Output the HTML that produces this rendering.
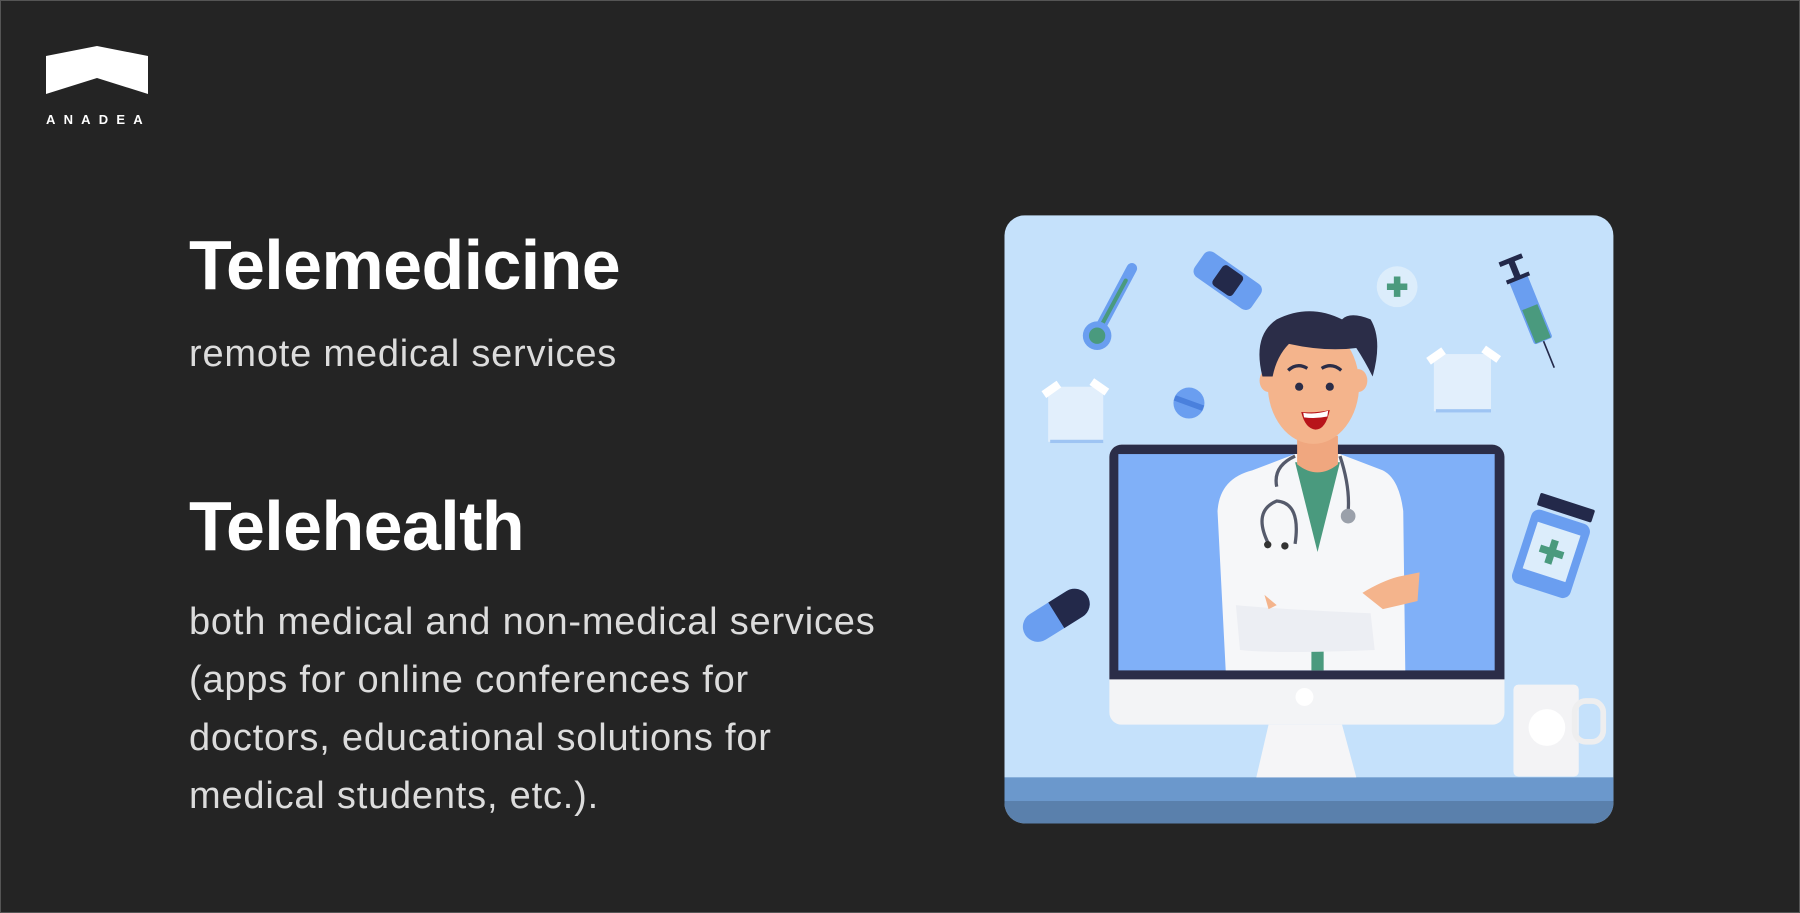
<!DOCTYPE html>
<html><head><meta charset="utf-8"><style>
html,body{margin:0;padding:0}
body{width:1800px;height:913px;background:#242424;position:relative;overflow:hidden;font-family:"Liberation Sans",Arial,sans-serif;border:1px solid #555;box-sizing:border-box}
.t{position:absolute;left:188px;color:#fff;font-weight:bold;font-size:70px;letter-spacing:-0.6px;line-height:1}
.s{position:absolute;left:188px;color:#dcdcdc;font-size:38px;letter-spacing:0.8px;line-height:58px}
.logo{position:absolute;left:45px;top:45px}
.an{position:absolute;left:45px;top:111px;color:#fff;font-size:13px;letter-spacing:8.2px;font-weight:bold}
</style></head><body>
<svg class="logo" width="102" height="48" viewBox="0 0 102 48"><path d="M0 10 L51 0 L102 10 L102 48 L51 32 L0 48 Z" fill="#fff"/></svg>
<div class="an">ANADEA</div>
<div class="t" style="top:229px">Telemedicine</div>
<div class="s" style="top:324px">remote medical services</div>
<div class="t" style="top:490px">Telehealth</div>
<div class="s" style="top:592px">both medical and non-medical services<br>(apps for online conferences for<br>doctors, educational solutions for<br>medical students, etc.).</div>

<svg style="position:absolute;left:990px;top:200px" width="640" height="640" viewBox="0 0 1568 1568">
<defs><clipPath id="c"><rect x="33" y="35" width="1492" height="1490" rx="50"/></clipPath></defs>
<g clip-path="url(#c)">
<rect x="33" y="35" width="1492" height="1490" fill="#c5e1fb"/>
<rect x="33" y="1412" width="1492" height="60" fill="#6b98cc"/>
<rect x="33" y="1470" width="1492" height="60" fill="#5a80ac"/>
</g>
<line x1="345" y1="165" x2="265" y2="315" stroke="#6a9ef0" stroke-width="26" stroke-linecap="round"/>
<line x1="330" y1="195" x2="265" y2="315" stroke="#4a9a7e" stroke-width="10" stroke-linecap="round"/>
<circle cx="260" cy="330" r="35" fill="#6a9ef0"/><circle cx="260" cy="330" r="20" fill="#4a9a7e"/>
<g transform="rotate(35 580 195)"><rect x="495" y="158" width="170" height="74" rx="18" fill="#6a9ef0"/><rect x="550" y="165" width="60" height="60" rx="10" fill="#23294a"/></g>
<circle cx="995" cy="210" r="50" fill="#dcedfb"/><path d="M995 185v50M970 210h50" stroke="#4a9a7e" stroke-width="16"/>
<g transform="rotate(-22 1320 260)"><rect x="1296" y="180" width="48" height="170" rx="6" fill="#6a9ef0"/><rect x="1300" y="260" width="40" height="88" fill="#4a9a7e"/><rect x="1312" y="140" width="16" height="40" fill="#23294a"/><rect x="1290" y="130" width="60" height="12" fill="#23294a"/><rect x="1290" y="178" width="60" height="10" fill="#23294a"/><line x1="1320" y1="350" x2="1320" y2="420" stroke="#23294a" stroke-width="4"/></g>
<rect x="140" y="455" width="135" height="135" fill="#e2effc"/><rect x="145" y="585" width="130" height="8" fill="#9ec4f3"/>
<rect x="1085" y="375" width="140" height="140" fill="#e2effc"/><rect x="1090" y="510" width="135" height="8" fill="#9ec4f3"/>
<g transform="rotate(-35 150 460)"><rect x="125" y="450" width="45" height="20" fill="#fff"/></g>
<g transform="rotate(35 265 455)"><rect x="243" y="445" width="45" height="20" fill="#fff"/></g>
<g transform="rotate(-35 1090 380)"><rect x="1068" y="370" width="45" height="20" fill="#fff"/></g>
<g transform="rotate(35 1225 375)"><rect x="1203" y="365" width="45" height="20" fill="#fff"/></g>
<circle cx="485" cy="495" r="38" fill="#6a9ef0"/><g transform="rotate(20 485 495)"><rect x="448" y="488" width="74" height="14" fill="#4a80dd"/></g>
<g transform="rotate(-32 160 1015)"><rect x="70" y="978" width="180" height="74" rx="37" fill="#6a9ef0"/><path d="M160 978h53a37 37 0 0 1 0 74h-53z" fill="#23294a"/></g>
<g transform="rotate(18 1375 855)"><rect x="1300" y="770" width="150" height="190" rx="20" fill="#6a9ef0"/><rect x="1305" y="730" width="140" height="32" rx="4" fill="#23294a"/><rect x="1320" y="800" width="110" height="120" fill="#dcedfb"/><path d="M1375 830v60M1345 860h60" stroke="#4a9a7e" stroke-width="18"/></g>
<rect x="1280" y="1185" width="160" height="225" rx="12" fill="#f3f3f5"/><rect x="1430" y="1225" width="70" height="100" rx="28" fill="none" stroke="#eeeeef" stroke-width="14"/><circle cx="1362" cy="1290" r="45" fill="#fff"/>
<path d="M680 1283h180l35 129h-245z" fill="#f5f5f7"/>
<rect x="290" y="597" width="968" height="686" rx="30" fill="#f3f4f6"/>
<path d="M290 627a30 30 0 0 1 30-30h908a30 30 0 0 1 30 30v545h-968z" fill="#2b2d48"/>
<rect x="312" y="620" width="922" height="530" fill="#80b0f8"/>
<circle cx="768" cy="1215" r="22" fill="#fff"/>
<path d="M575 1150 L555 760 Q560 680 640 660 L745 620 L855 620 L960 660 Q1000 680 1010 760 L1015 1150 Z" fill="#f6f7f9"/>
<path d="M745 640 L800 860 L855 640 Z" fill="#4a9a7e"/>
<rect x="785" y="1060" width="30" height="90" fill="#4a9a7e"/>
<path d="M750 575h100v70q-50 40-100 0z" fill="#f0a77f"/>
<path d="M600 990 Q700 1000 930 1010 L940 1100 Q700 1110 610 1100 Z" fill="#eceef3"/>
<path d="M910 960 Q960 930 1000 920 L1050 910 L1045 980 L960 1000 Z" fill="#f4b48c"/>
<path d="M670 965 L700 990 L680 1000 Z" fill="#f4b48c"/>
<path d="M745 625 Q690 650 700 700 M855 625 Q880 700 875 760" stroke="#555a6b" stroke-width="8" fill="none"/>
<path d="M680 840 Q640 760 700 735 Q760 740 745 840" stroke="#555a6b" stroke-width="8" fill="none"/>
<circle cx="875" cy="772" r="18" fill="#9aa0aa"/><circle cx="678" cy="842" r="9" fill="#333"/><circle cx="720" cy="845" r="9" fill="#333"/>
<ellipse cx="680" cy="440" rx="22" ry="28" fill="#f4b48c"/>
<ellipse cx="900" cy="440" rx="22" ry="28" fill="#f4b48c"/>
<ellipse cx="790" cy="450" rx="112" ry="145" fill="#f4b48c"/>
<path d="M665 430 Q640 330 700 290 Q780 250 860 290 Q880 270 930 290 Q960 340 935 430 Q915 390 895 360 Q820 370 730 350 Q700 380 690 430 Z" fill="#2b2d48"/>
<path d="M728 415 Q750 395 775 410 M810 410 Q835 395 858 415" stroke="#2b2d48" stroke-width="8" fill="none"/>
<circle cx="755" cy="455" r="10" fill="#2b2d48"/><circle cx="830" cy="455" r="10" fill="#2b2d48"/>
<path d="M760 517 Q795 520 830 512 Q820 560 795 560 Q770 558 760 517 Z" fill="#b8141a"/>
<path d="M765 519 Q795 524 826 514 L824 528 Q795 534 767 530 Z" fill="#fff"/>
</svg>
</body></html>
